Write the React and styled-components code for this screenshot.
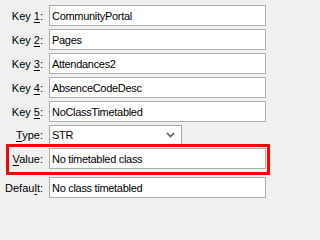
import React from "react";
import styled, { createGlobalStyle } from "styled-components";

const GlobalStyle = createGlobalStyle`
  html, body {
    margin: 0;
    padding: 0;
    background: #f0f0f0;
  }
  body {
    font-family: "Liberation Sans", Arial, sans-serif;
    font-size: 11px;
    color: #000;
  }
`;

const Form = styled.div`
  width: 271px;
  height: 202px;
  box-sizing: border-box;
  padding-top: 5px;
  display: flex;
  flex-direction: column;
  gap: 3px;
  background: #f0f0f0;
`;

const Row = styled.div`
  position: relative;
  display: flex;
  align-items: center;
  gap: 6px;
  height: ${(p) => (p.$short ? "20px" : "21px")};
  margin-top: ${(p) => p.$offset || 0}px;

  ${(p) =>
    p.$highlight &&
    `
    &::after {
      content: "";
      position: absolute;
      left: 6px;
      right: 1px;
      top: -4px;
      bottom: -6px;
      border: 3px solid #ff0000;
      pointer-events: none;
    }
  `}
`;

const Label = styled.label`
  width: 43px;
  flex: none;
  text-align: right;
  white-space: nowrap;
  color: #000;

  u {
    text-decoration: underline;
    text-underline-offset: 2px;
  }
`;

const TextBox = styled.div`
  width: 217px;
  height: 21px;
  box-sizing: border-box;
  border: 1px solid #adadad;
  background: #fff;
  padding-left: 2px;
  display: flex;
  align-items: center;
  white-space: nowrap;
  overflow: hidden;
  letter-spacing: -0.3px;
`;

const Select = styled.div`
  width: 133px;
  height: 20px;
  box-sizing: border-box;
  border: 1px solid #a6a6a6;
  background: #fff;
  padding: 0 6px 0 2px;
  display: flex;
  align-items: center;
  justify-content: space-between;
  letter-spacing: -0.3px;
`;

const Chevron = () => (
  <svg width="9" height="6" viewBox="0 0 9 6">
    <path d="M1 1 L4.5 4.5 L8 1" fill="none" stroke="#5a5a5a" strokeWidth="1.6" />
  </svg>
);

const fields = [
  { pre: "Key ", key: "1", post: ":", value: "CommunityPortal" },
  { pre: "Key ", key: "2", post: ":", value: "Pages" },
  { pre: "Key ", key: "3", post: ":", value: "Attendances2" },
  { pre: "Key ", key: "4", post: ":", value: "AbsenceCodeDesc" },
  { pre: "Key ", key: "5", post: ":", value: "NoClassTimetabled" },
];

function App() {
  return (
    <>
      <GlobalStyle />
      <Form>
        {fields.map((f) => (
          <Row key={f.key}>
            <Label>
              {f.pre}
              <u>{f.key}</u>
              {f.post}
            </Label>
            <TextBox>{f.value}</TextBox>
          </Row>
        ))}
        <Row $short>
          <Label>
            <u>T</u>ype:
          </Label>
          <Select>
            <span>STR</span>
            <Chevron />
          </Select>
        </Row>
        <Row $highlight>
          <Label>
            <u>V</u>alue:
          </Label>
          <TextBox>No timetabled class</TextBox>
        </Row>
        <Row $offset={5}>
          <Label>
            Defau<u>l</u>t:
          </Label>
          <TextBox>No class timetabled</TextBox>
        </Row>
      </Form>
    </>
  );
}

export default App;
